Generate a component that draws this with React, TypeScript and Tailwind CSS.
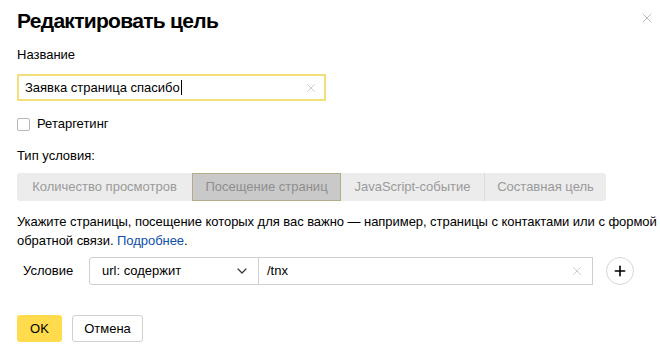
import { X, ChevronDown, Plus } from 'lucide-react'

const tabs = [
    { label: 'Количество просмотров', w: 'w-[175px]' },
    { label: 'Посещение страниц', w: 'w-[149px]', active: true },
    { label: 'JavaScript-событие', w: 'w-[143px]' },
    { label: 'Составная цель', w: 'w-[122px]' },
]

const App = () => {
    return (
        <div className="relative w-[660px] h-[357px] bg-white text-[#000] font-['Liberation_Sans',Arial,sans-serif] px-[17px] pt-[6px]">
            <button className="absolute right-[5px] top-[10px] text-[#b3b3b3]">
                <X size={16} strokeWidth={1.3} />
            </button>
            <h1 className="text-[21px] font-bold leading-[30px] tracking-[-0.7px]">
                Редактировать цель
            </h1>
            <div className="mt-[11px] text-[13px] leading-[16px]">Название</div>
            <div className="mt-[11px] w-[309px] h-[27px] border-2 border-[#f3df7a] flex items-center pl-[6px] pr-[6px]">
                <span className="text-[13px] text-[#000] flex-1 flex items-center">
                    Заявка страница спасибо
                    <span className="inline-block w-px h-[15px] bg-black ml-px" />
                </span>
                <X size={14} strokeWidth={1} className="text-[#a8a8a8]" />
            </div>
            <label className="mt-[16px] flex items-center gap-[7px] h-[14px]">
                <span className="w-[13px] h-[13px] rounded-[2px] border border-[#b8b8b8] bg-white" />
                <span className="text-[13px]">Ретаргетинг</span>
            </label>
            <div className="mt-[17px] text-[13px] leading-[16px]">Тип условия:</div>
            <div className="mt-[9px] flex h-[28px] w-fit rounded-[3px] bg-[#ececec] overflow-hidden text-[13px] text-[#9a9a9a]">
                {tabs.map((t, i) => (
                    <div
                        key={t.label}
                        className={
                            t.active
                                ? `${t.w} flex items-center justify-center bg-[#c9c9c9] border border-[#b5ab86] text-[#8e8e8e]`
                                : `${t.w} flex items-center justify-center ${i === 3 ? 'border-l border-[#dcdcdc]' : ''}`
                        }
                    >
                        {t.label}
                    </div>
                ))}
            </div>
            <p className="mt-[11px] w-[640px] text-[13px] leading-[19px] tracking-[-0.05px]">
                Укажите страницы, посещение которых для вас важно — например, страницы с контактами или с формой обратной связи.{' '}
                <a className="text-[#0f4fa8]">Подробнее</a>.
            </p>
            <div className="mt-[7px] flex items-center h-[28px]">
                <span className="w-[72px] pl-[6px] text-[13px]">Условие</span>
                <div className="w-[170px] h-[28px] border border-[#cfcfcf] rounded-l-[3px] flex items-center pl-[12px] pr-[8px] text-[13px]">
                    <span className="flex-1">url: содержит</span>
                    <ChevronDown size={16} strokeWidth={1.8} className="text-[#333]" />
                </div>
                <div className="w-[334px] h-[28px] border border-l-0 border-[#cfcfcf] flex items-center pl-[8px] pr-[8px] text-[13px]">
                    <span className="flex-1">/tnx</span>
                    <X size={14} strokeWidth={1} className="text-[#a8a8a8]" />
                </div>
                <button className="ml-[13px] w-[28px] h-[28px] rounded-full border border-[#d6d6d6] flex items-center justify-center">
                    <Plus size={16} strokeWidth={2.4} className="text-black" />
                </button>
            </div>
            <div className="mt-[30px] flex gap-[10px]">
                <button className="w-[45px] h-[27px] rounded-[3px] bg-[#ffdb4d] text-[13px]">OK</button>
                <button className="w-[71px] h-[27px] rounded-[3px] border border-[#d0d0d0] bg-white text-[13px]">Отмена</button>
            </div>
        </div>
    )
}

export default App
